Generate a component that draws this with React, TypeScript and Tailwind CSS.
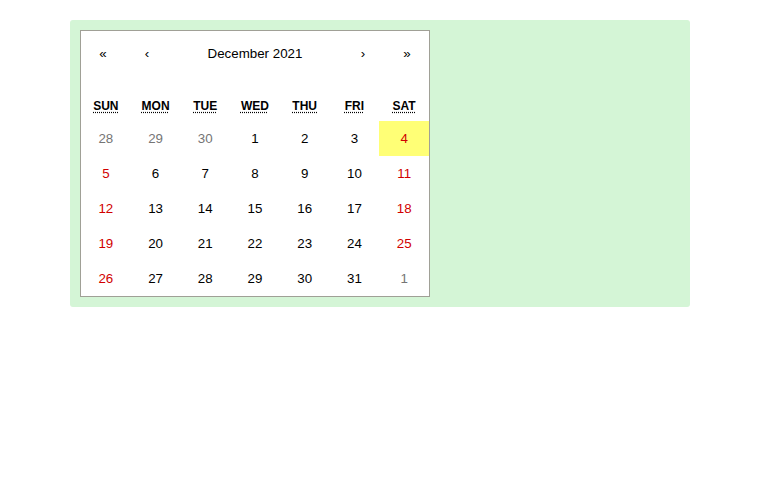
const weekdays = [
  { short: "Sun", long: "Sunday" },
  { short: "Mon", long: "Monday" },
  { short: "Tue", long: "Tuesday" },
  { short: "Wed", long: "Wednesday" },
  { short: "Thu", long: "Thursday" },
  { short: "Fri", long: "Friday" },
  { short: "Sat", long: "Saturday" },
];

type Day = { n: number; outside?: boolean };

const days: Day[] = [
  { n: 28, outside: true },
  { n: 29, outside: true },
  { n: 30, outside: true },
  ...Array.from({ length: 31 }, (_, i) => ({ n: i + 1 })),
  { n: 1, outside: true },
];

function Tile({ day, index }: { day: Day; index: number }) {
  const weekend = index % 7 === 0 || index % 7 === 6;
  const today = !day.outside && day.n === 4;
  let color = "text-black";
  if (day.outside) color = "text-[#757575]";
  else if (weekend) color = "text-[#d10000]";
  return (
    <button
      className={
        "px-[6.67px] py-[10px] text-center text-[13.33px] leading-[15px] " +
        color +
        (today ? " bg-[#ffff76]" : " bg-transparent")
      }
    >
      <abbr aria-label={`December ${day.n}, 2021`}>{day.n}</abbr>
    </button>
  );
}

export default function App() {
  return (
    <div className="min-h-screen bg-white pt-5 pl-[70px] font-['Liberation_Sans',Arial,sans-serif]">
      <div className="w-[620px] rounded-[3px] bg-[#d4f5d6] p-[10px]">
        <div className="w-[350px] border border-[#a0a096] bg-white leading-[18px]">
          <div className="mb-4 flex h-[44px] pt-[2px]">
            <button className="min-w-[44px] text-[13.33px]">«</button>
            <button className="min-w-[44px] text-[13.33px]">‹</button>
            <button className="flex-1 text-[13.33px] text-black">December 2021</button>
            <button className="min-w-[44px] text-[13.33px]">›</button>
            <button className="min-w-[44px] text-[13.33px]">»</button>
          </div>
          <div className="grid grid-cols-7 text-center text-xs font-bold uppercase leading-[18px]">
            {weekdays.map((w) => (
              <div key={w.short} className="p-[6px]">
                <abbr title={w.long} className="underline decoration-dotted underline-offset-2">
                  {w.short}
                </abbr>
              </div>
            ))}
          </div>
          <div className="grid grid-cols-7">
            {days.map((d, i) => (
              <Tile key={i} day={d} index={i} />
            ))}
          </div>
        </div>
      </div>
    </div>
  );
}
